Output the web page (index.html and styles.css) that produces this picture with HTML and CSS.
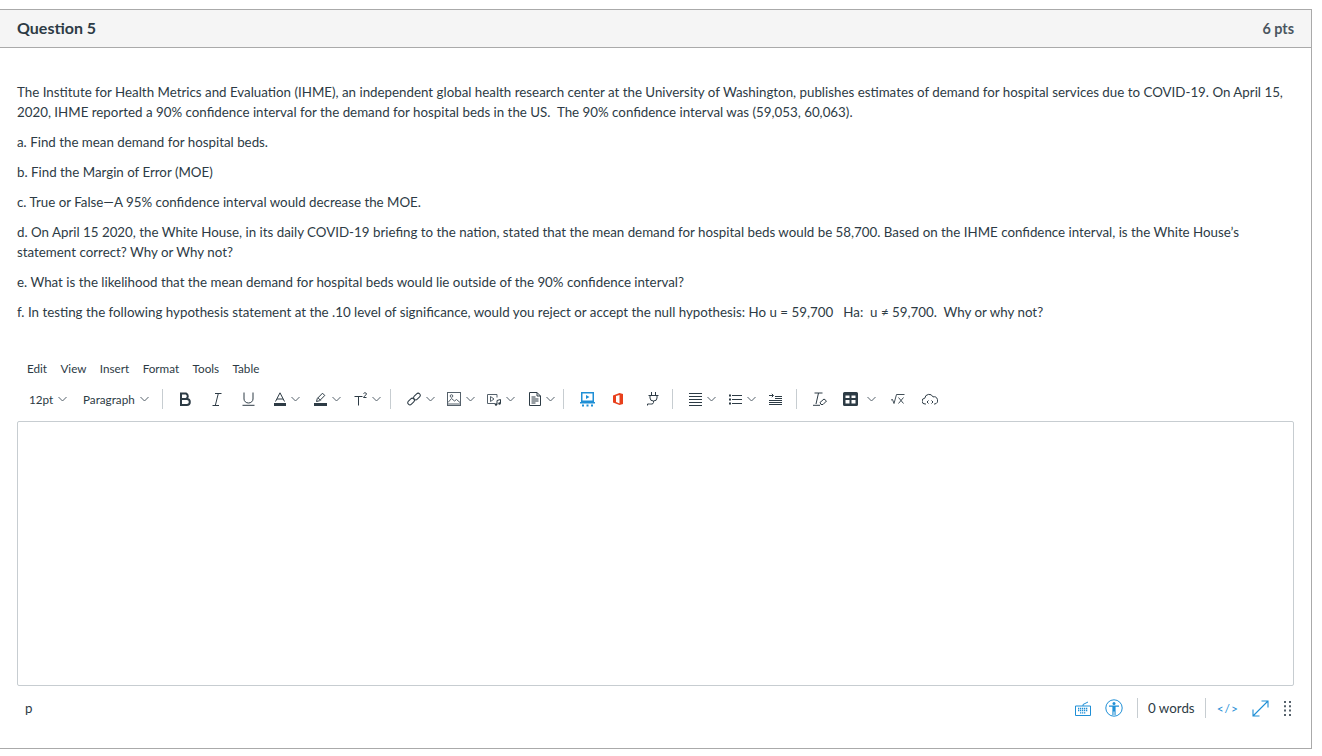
FILE: index.html

```html
<!DOCTYPE html>
<html lang="en">
<head>
  <meta charset="UTF-8" />
  <title>Question 5</title>
  <link rel="stylesheet" href="styles.css">
</head>
<body>
  <svg class="defs" width="0" height="0">
    <symbol id="chev" viewBox="0 0 9 6"><path d="M.5 1l4 4 4-4" fill="none" stroke="#55616b" stroke-width="1"/></symbol>
  </svg>

  <div class="question">
    <div class="question-header">
      <span class="question-name">Question 5</span>
      <span class="question-pts">6 pts</span>
    </div>

    <div class="question-text">
      <p>The Institute for Health Metrics and Evaluation (IHME), an independent global health research center at the University of Washington, publishes estimates of demand for hospital services due to COVID-19. On April 15, 2020, IHME reported a 90% confidence interval for the demand for hospital beds in the US.&nbsp; The 90% confidence interval was (59,053, 60,063).</p>
      <p>a. Find the mean demand for hospital beds.</p>
      <p>b. Find the Margin of Error (MOE)</p>
      <p>c. True or False—A 95% confidence interval would decrease the MOE.</p>
      <p>d. On April 15 2020, the White House, in its daily COVID-19 briefing to the nation, stated that the mean demand for hospital beds would be 58,700. Based on the IHME confidence interval, is the White House’s statement correct? Why or Why not?</p>
      <p>e. What is the likelihood that the mean demand for hospital beds would lie outside of the 90% confidence interval?</p>
      <p>f. In testing the following hypothesis statement at the .10 level of significance, would you reject or accept the null hypothesis: Ho u = 59,700&nbsp;&nbsp; Ha:&nbsp; u ≠ 59,700.&nbsp; Why or why not?</p>
    </div>

    <div class="menubar">
      <span>Edit</span><span>View</span><span>Insert</span><span>Format</span><span>Tools</span><span>Table</span>
    </div>

    <div class="toolbar">
      <div class="select w-size">12pt <svg class="chev"><use href="#chev"/></svg></div>
      <div class="select w-para">Paragraph <svg class="chev"><use href="#chev"/></svg></div>
      <i class="sep"></i>

      <div class="tool t-b"><svg width="13" height="14" viewBox="0 0 13 14"><path d="M2 1.500h5a3 3 0 0 1 0 5.500H2zM2 7h5.800a3 3 0 0 1 0 6H2z" fill="none" stroke="#2d3b45" stroke-width="2"/></svg></div>
      <div class="tool t-i"><svg width="10" height="13" viewBox="0 0 10 13"><path d="M3 .5h6.500M.5 12.500H7M6.300.5L3.300 12.500" fill="none" stroke="#2d3b45"/></svg></div>
      <div class="tool t-u"><svg width="13" height="14" viewBox="0 0 13 14"><path d="M2 .5v6.500a4.500 4 0 0 0 9 0V.5M.5 13.300h12" fill="none" stroke="#2d3b45"/></svg></div>
      <div class="tool split"><svg width="12" height="14" viewBox="0 0 12 14"><path d="M1.500 9.500L6 .8l4.500 8.700M3 7h6" fill="none" stroke="#2d3b45"/><rect y="11" width="12" height="3" fill="#2d3b45"/></svg><svg class="chev"><use href="#chev"/></svg></div>
      <div class="tool split"><svg width="13" height="14" viewBox="0 0 13 14"><path d="M2.500 9.500l.8-3L8.500 1.200l2.300 2.300-5.200 5.200z" fill="#fff" stroke="#2d3b45"/><path d="M4 5.800l2.700 2.700" stroke="#2d3b45"/><rect y="11" width="13" height="3" fill="#2d3b45"/></svg><svg class="chev"><use href="#chev"/></svg></div>
      <div class="tool split t-sup"><svg width="13" height="14" viewBox="0 0 13 14"><path d="M.5 4.500h8M4.500 4.500V13.500" fill="none" stroke="#2d3b45"/><path d="M9.500 1.500c.5-1 3-1 3 .5 0 1-2.500 2-3 3.500h3" fill="none" stroke="#2d3b45"/></svg><svg class="chev"><use href="#chev"/></svg></div>
      <i class="sep"></i>

      <div class="tool split"><svg width="14" height="14" viewBox="0 0 14 14"><g fill="none" stroke="#2d3b45"><rect x=".3" y="7.500" width="7.500" height="4.200" rx="2.100" transform="rotate(-45 4 9.500)"/><rect x="6.200" y="2.400" width="7.500" height="4.200" rx="2.100" transform="rotate(-45 10 4.500)"/></g></svg><svg class="chev"><use href="#chev"/></svg></div>
      <div class="tool split"><svg width="14" height="14" viewBox="0 0 14 14"><g fill="none" stroke="#55616b"><rect x=".5" y=".5" width="13" height="13"/><path d="M1 10.500l3.500-4 3 2.500 2-1.500 3.500 3M1 12h12"/><circle cx="4.500" cy="4" r="1.300"/></g></svg><svg class="chev"><use href="#chev"/></svg></div>
      <div class="tool split"><svg width="14" height="14" viewBox="0 0 14 14"><g fill="none" stroke="#55616b"><path d="M8 11.500H.5v-9h9.500v3"/><path d="M3.500 4.500l3.500 2.500-3.500 2.500z"/></g><path d="M10 12.500V8.500l3.500-1v4" fill="none" stroke="#2d3b45"/><circle cx="9" cy="12.500" r="1.200" fill="#2d3b45"/><circle cx="12.500" cy="11.500" r="1.200" fill="#2d3b45"/></svg><svg class="chev"><use href="#chev"/></svg></div>
      <div class="tool split t-doc"><svg width="12" height="14" viewBox="0 0 12 14"><path d="M.5.5h7.500l3.500 3.500v9.500H.5zM8 .5V4h3.500" fill="none" stroke="#2d3b45"/><path d="M2.500 5h4M2.500 7h7M2.500 9h7M2.500 11h4" stroke="#2d3b45"/></svg><svg class="chev"><use href="#chev"/></svg></div>
      <i class="sep"></i>

      <div class="tool single"><svg width="15" height="15" viewBox="0 0 15 15"><path d="M1 0h13v10H1z" fill="#1f8fd6"/><rect x="2.500" y="1.500" width="10" height="7" fill="#fff"/><path d="M6 3l3.500 2L6 7z" fill="#1f8fd6"/><rect y="10" width="15" height="1.500" fill="#1f8fd6"/><path d="M2 12.500h2v2H2zM6.500 12.500h2v2h-2zM11 12.500h2v2h-2z" fill="#1f8fd6"/></svg></div>
      <div class="tool single"><svg width="10" height="12" viewBox="0 0 10 12"><path d="M0 2.500L6.500 0 10 1v10l-3.500 1L0 9.500zM6.500 10.500V2L3 3v6z" fill="#e8401c"/></svg></div>
      <div class="tool t-plug"><svg width="13" height="14" viewBox="0 0 13 14"><g fill="none" stroke="#2d3b45"><path d="M5.500 0v3.500M9.500 0v3.500M2.500 3.500h10M4 3.500v2.500a3.500 3 0 0 0 7 0V3.500M7.500 9v1.500c0 2-3 1.500-4 1.500H1.500v1.500"/></g></svg></div>
      <i class="sep"></i>

      <div class="tool split"><svg width="13" height="13" viewBox="0 0 13 13"><path d="M0 .5h13M0 3.500h13M0 6.500h13M0 9.500h13M0 12.500h13" stroke="#2d3b45"/></svg><svg class="chev"><use href="#chev"/></svg></div>
      <div class="tool split"><svg width="13" height="11" viewBox="0 0 13 11"><path d="M3 1.500h10M3 5.500h10M3 9.500h10" stroke="#2d3b45"/><path d="M0 .5h2v2H0zM0 4.500h2v2H0zM0 8.500h2v2H0z" fill="#2d3b45"/></svg><svg class="chev"><use href="#chev"/></svg></div>
      <div class="tool t-indent"><svg width="13" height="12" viewBox="0 0 13 12"><path d="M0 7.500h13M0 9.500h13M0 11.500h13M6 5.500h7M6 3.500h7" stroke="#2d3b45"/><path d="M0 2.500h4M2.800 .8l1.700 1.700-1.700 1.700" fill="none" stroke="#2d3b45"/></svg></div>
      <i class="sep"></i>

      <div class="tool t-clear"><svg width="14" height="14" viewBox="0 0 14 14"><path d="M1.500 1h8M5.500 1L3 12M0 13.300h7" fill="none" stroke="#2d3b45"/><path d="M7 10.500L11 7l2.500 2-3.500 3.500H8z" fill="none" stroke="#2d3b45"/></svg></div>
      <div class="tool t-table"><svg width="15" height="14" viewBox="0 0 15 14"><path d="M1.500 0h12A1.500 1.500 0 0 1 15 1.500v11a1.500 1.500 0 0 1-1.500 1.500h-12A1.500 1.500 0 0 1 0 12.500v-11A1.500 1.500 0 0 1 1.500 0zM2.500 3.500v2.500h4V3.500zM8.500 3.500v2.500h4V3.500zM2.500 8v3.500h4V8zM8.500 8v3.500h4V8z" fill="#2d3b45" fill-rule="evenodd"/></svg><svg class="chev"><use href="#chev"/></svg></div>
      <div class="tool t-sqrt"><svg width="14" height="10" viewBox="0 0 14 10"><path d="M0 6l1.500-.5L3 9.500 5.500.5h8M7.500 3.500l5 6M12.500 3.500l-5 6" fill="none" stroke="#2d3b45" stroke-width=".9"/></svg></div>
      <div class="tool t-cloud"><svg width="16" height="13" viewBox="0 0 16 13"><path d="M4 11H3.200a2.900 2.900 0 0 1-.4-5.800 4.300 4.300 0 0 1 8.200-1.300 3.600 3.600 0 0 1 1.800 7.100H12M6.500 7.500L5 9l1.500 1.500M9.500 7.500L11 9l-1.500 1.500" fill="none" stroke="#2d3b45"/></svg></div>
    </div>

    <div class="editor"></div>

    <div class="statusbar">
      <span class="path">p</span>
      <div class="status-right">
        <svg class="st-kbd" width="16" height="15" viewBox="0 0 16 15"><path d="M.5 5h15v9.500H.5zM8 5V3.500l5-2.500" fill="none" stroke="#1f8fd6"/><path d="M3 7.500h10M3 9.500h10M5 11.800h6" fill="none" stroke="#1f8fd6" stroke-width="1.300" stroke-dasharray="1.300 .7"/></svg>
        <svg class="st-a11y" width="18" height="18" viewBox="0 0 18 18"><circle cx="9" cy="9" r="8.200" fill="none" stroke="#1f8fd6"/><circle cx="9" cy="4.500" r="1.500" fill="#1f8fd6"/><path d="M4 6.500h10v1.300h-3.400v8.200H9.500v-3.500h-1V16H7.400V7.800H4z" fill="#1f8fd6"/></svg>
        <i class="sep st-sep1"></i>
        <span class="words">0 words</span>
        <i class="sep st-sep2"></i>
        <span class="code">&lt;/&gt;</span>
        <svg class="st-exp" width="17" height="17" viewBox="0 0 17 17"><path d="M1 16L16 1M9.500 1H16v6.500M1 9.500V16h6.500" fill="none" stroke="#1f8fd6" stroke-width="1.100"/></svg>
        <svg class="st-grip" width="7" height="15" viewBox="0 0 7 15"><path d="M0 0h2v2H0zM5 0h2v2H5zM0 4.300h2v2H0zM5 4.300h2v2H5zM0 8.600h2v2H0zM5 8.600h2v2H5zM0 13h2v2H0zM5 13h2v2H5z" fill="#55616b"/></svg>
      </div>
    </div>
  </div>
</body>
</html>
```

FILE: styles.css

```css
html, body {
  margin: 0;
  padding: 0;
  background: #fff;
  font-family: Lato, "Liberation Sans", sans-serif;
  color: #2d3b45;
}
.defs {
  display: block;
  height: 0;
}
.question {
  width: 1312px;
  height: 740px;
  margin-top: 9px;
  box-sizing: border-box;
  border: 1px solid #aaa;
  border-left: none;
}
.question-header {
  display: flex;
  justify-content: space-between;
  align-items: center;
  height: 37px;
  padding: 0 17px;
  background: #f5f5f5;
  border-bottom: 1px solid #aaa;
}
.question-name {
  font-size: 16px;
  font-weight: 700;
  margin-bottom: 2px;
}
.question-pts {
  font-size: 14.4px;
  font-weight: 700;
  color: #4a5560;
}
.question-text {
  padding: 34px 17px 0;
  font-size: 13.33px;
  line-height: 20px;
}
.question-text p {
  margin: 0 0 10px;
}
.menubar {
  display: flex;
  margin: 38px 0 0 27px;
  font-size: 11.7px;
  line-height: 16px;
}
.menubar span {
  margin-right: 13.4px;
}
.toolbar {
  display: flex;
  align-items: center;
  height: 24px;
  margin: 11px 0 0 29px;
  font-size: 11.7px;
}
.select {
  display: flex;
  align-items: center;
  gap: 5px;
}
.w-size { width: 54px; }
.w-para { width: 79px; }
.sep {
  display: block;
  flex: none;
  width: 1px;
  height: 20px;
  background: #c7cdd1;
}
.tool {
  display: flex;
  align-items: center;
  flex: none;
}
.chev {
  width: 9px;
  height: 6px;
  flex: none;
}
.split {
  width: 40px;
  gap: 5px;
}
.single {
  width: 33px;
}
.t-b { width: 33px; margin-left: 16px; }
.t-i { width: 30px; }
.t-u { width: 32px; }
.t-sup { width: 36px; }
.t-doc { width: 34px; margin-left: 2px; }
.t-plug { width: 26px; }
.t-indent { width: 27px; }
.t-clear { width: 30px; }
.t-table { width: 48px; gap: 9px; }
.t-sqrt { width: 31px; }
.toolbar .sep + .tool { margin-left: 16px; }
.editor {
  height: 263px;
  width: 1275px;
  margin: 10px 18px 0 17px;
  border: 1px solid #c7cdd1;
  border-radius: 2px;
}
.statusbar {
  display: flex;
  align-items: center;
  justify-content: space-between;
  height: 24px;
  margin-top: 10px;
  padding: 0 20px 0 25px;
  font-size: 13.33px;
}
.status-right {
  display: flex;
  align-items: center;
}
.st-a11y { margin-left: 14px; }
.st-sep1 { margin-left: 14px; }
.words { margin-left: 10px; }
.st-sep2 { margin-left: 10px; }
.code {
  margin-left: 11px;
  color: #1f8fd6;
  font-size: 12px;
  letter-spacing: 1px;
}
.st-exp { margin-left: 13px; }
.st-grip { margin-left: 15px; }
```
